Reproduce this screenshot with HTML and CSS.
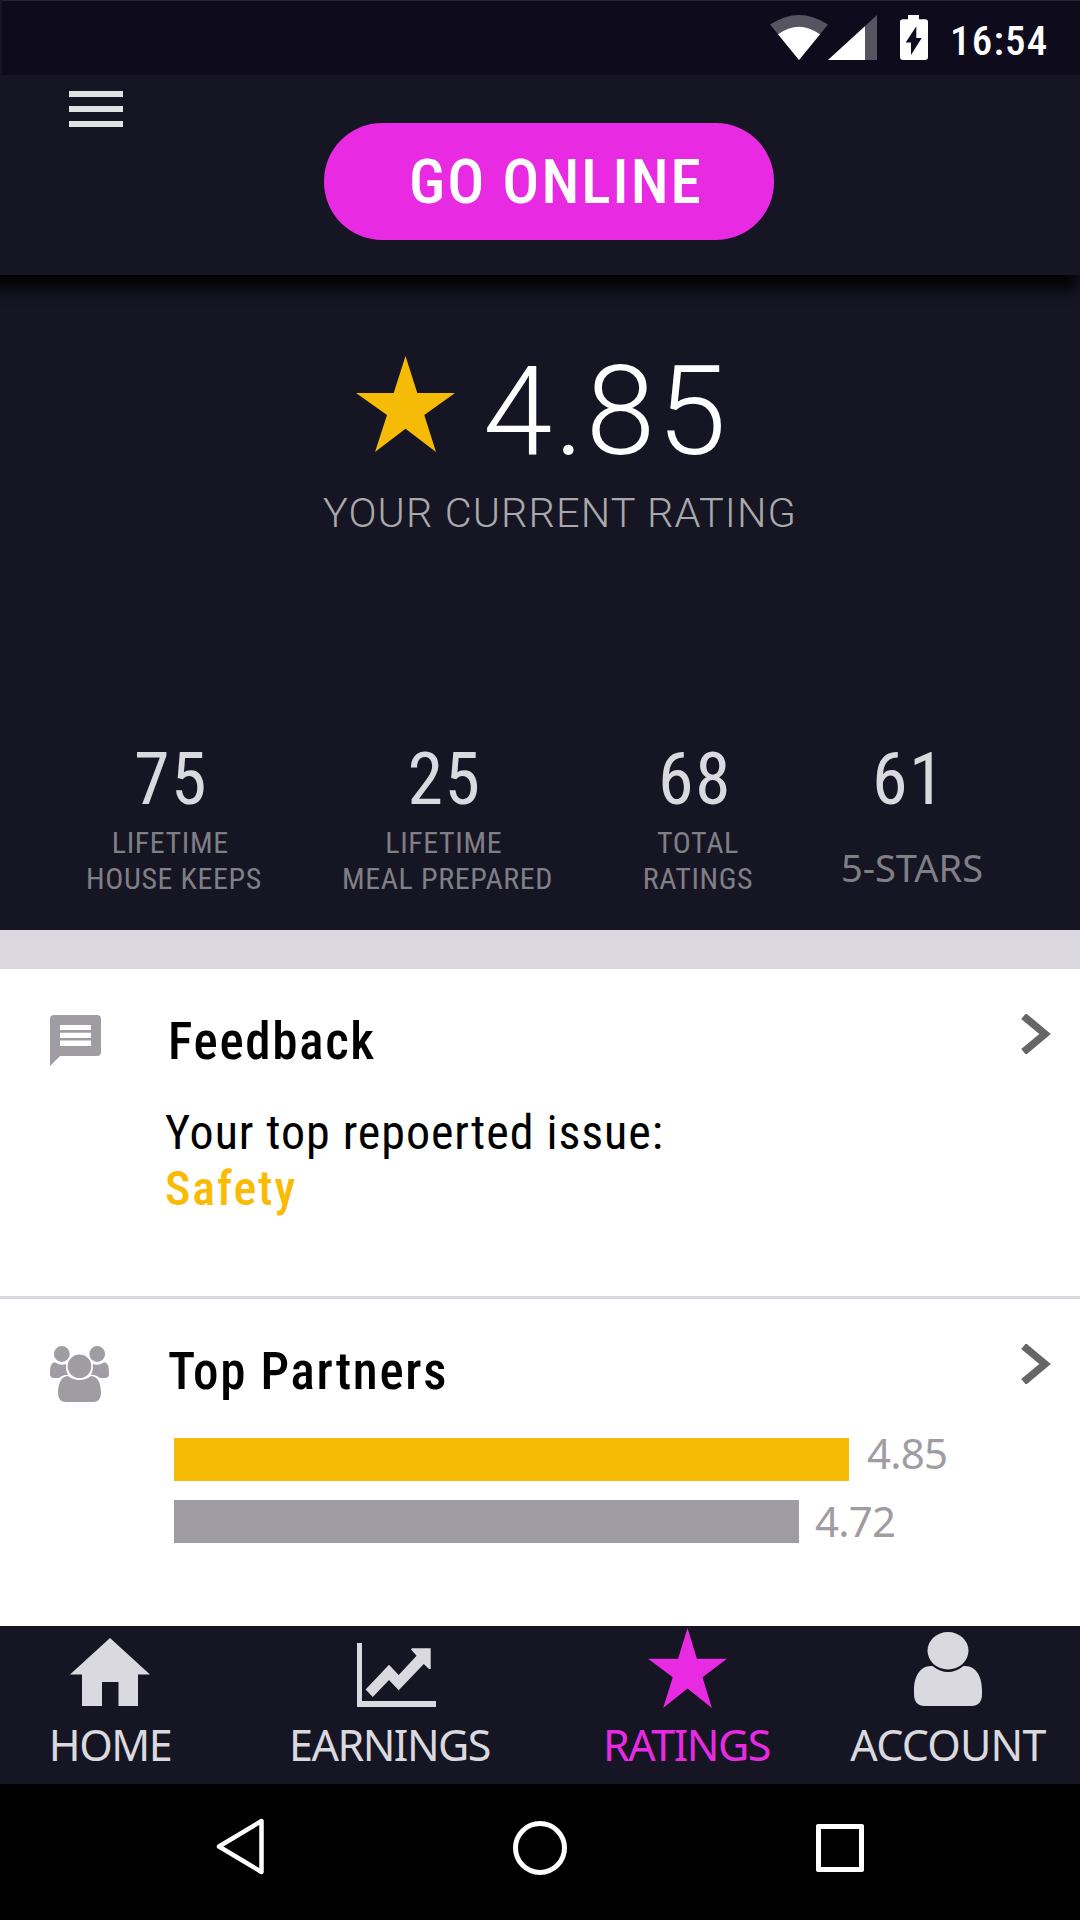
FILE: index.html
```html
<!DOCTYPE html>
<html lang="en">
<head>
    <meta charset="UTF-8">
    <meta name="viewport" content="width=device-width, initial-scale=1.0">
    <title>Ratings</title>
    <link rel="stylesheet" href="styles.css">
</head>
<body>
    <div class="status-bar">
        <svg class="wifi" width="58" height="45" viewBox="0 0 58 45">
            <path d="M0 9.5Q29 -9.5 58 9.5L29 45Z" fill="#565460"/>
            <path d="M8 19.3Q29 4 50 19.3L29 45Z" fill="#fff"/>
        </svg>
        <svg class="signal" width="49" height="45" viewBox="0 0 49 45">
            <path d="M0 45L49 0V45Z" fill="#565460"/>
            <path d="M0 45L37 11.3V45Z" fill="#fff"/>
        </svg>
        <svg class="battery" width="28" height="45" viewBox="0 0 28 45">
            <path d="M8 0H19V4.3H25Q28 4.3 28 7V42Q28 45 25 45H3Q0 45 0 42V7Q0 4.3 3 4.3H8Z" fill="#fff"/>
            <path d="M16.3 11.3V23H21.7L11 40V27.5H5.7Z" fill="#0d0b1c"/>
        </svg>
        <span class="time">16:54</span>
    </div>

    <header class="header">
        <div class="menu">
            <span></span>
            <span></span>
            <span></span>
        </div>
        <button class="go-online">GO ONLINE</button>
    </header>

    <section class="rating">
        <div class="rating-score">
            <svg width="99" height="96" viewBox="0 0 99 96">
                <path d="M49.5 0L61.3 37H99L68.3 59L80 96L49.5 72.7L19 96L31 59L0 37H37.7Z" fill="#f5bb06"/>
            </svg>
            <span>4.85</span>
        </div>
        <p class="rating-label">YOUR CURRENT RATING</p>

        <div class="stats">
            <div class="stat">
                <div class="stat-number">75</div>
                <p>LIFETIME&nbsp;<br>HOUSE KEEPS</p>
            </div>
            <div class="stat">
                <div class="stat-number">25</div>
                <p>LIFETIME&nbsp;<br>MEAL PREPARED</p>
            </div>
            <div class="stat">
                <div class="stat-number">68</div>
                <p>TOTAL<br>RATINGS</p>
            </div>
            <div class="stat">
                <div class="stat-number">61</div>
                <p class="five-stars">5-STARS</p>
            </div>
        </div>
    </section>

    <section class="card feedback">
        <svg class="card-icon" width="51" height="51" viewBox="0 0 51 51">
            <path d="M4 0H47Q51 0 51 4V37Q51 41 47 41H10L0 51V4Q0 0 4 0Z" fill="#9f9da3"/>
            <path d="M10 10H41V15H10ZM10 17.7H41V23H10ZM10 25.5H41V31H10Z" fill="#fff"/>
        </svg>
        <div class="card-body">
            <h2>Feedback</h2>
            <p class="issue">Your top repoerted issue:<br><b>Safety</b></p>
        </div>
        <svg class="chevron" width="30" height="40" viewBox="0 0 30 40">
            <path d="M5.5 4.5L24 20L5.5 35.5" fill="none" stroke="#666" stroke-width="7.5" stroke-linecap="square"/>
        </svg>
    </section>

    <section class="card partners">
        <svg class="card-icon" width="59" height="56" viewBox="0 0 59 56">
            <g fill="#9f9da3">
                <circle cx="11.8" cy="8" r="7.9"/>
                <circle cx="47.2" cy="8" r="7.9"/>
                <circle cx="29.5" cy="20.3" r="11.8"/>
                <path d="M4 16.3Q0 18 0 26V28Q0 32 4 32H9Q12 29 18 28.7Q15.5 24 16.2 18Q12 19.5 8 18Q6 16.5 4 16.3Z"/>
                <path d="M55 16.3Q59 18 59 26V28Q59 32 55 32H50Q47 29 41 28.7Q43.5 24 42.8 18Q47 19.5 51 18Q53 16.5 55 16.3Z"/>
                <path d="M18 30C10 30 8 40 8 47Q8 56 16 56H43Q51 56 51 47C51 40 49 30 41 30Q36 34 29.5 34Q23 34 18 30Z"/>
            </g>
        </svg>
        <div class="card-body">
            <h2>Top Partners</h2>
            <div class="bars">
                <div class="bar-row first">
                    <div class="bar" style="width: 675px"></div>
                    <span>4.85</span>
                </div>
                <div class="bar-row">
                    <div class="bar" style="width: 625px"></div>
                    <span>4.72</span>
                </div>
            </div>
        </div>
        <svg class="chevron" width="30" height="40" viewBox="0 0 30 40">
            <path d="M5.5 4.5L24 20L5.5 35.5" fill="none" stroke="#666" stroke-width="7.5" stroke-linecap="square"/>
        </svg>
    </section>

    <nav class="tabs">
        <div class="tab home">
            <div class="tab-icon">
                <svg width="80" height="68" viewBox="0 0 80 68">
                    <path d="M40 0L80 36.5H68V68H48.5V44H32V68H12V36.5H0Z" fill="#dad9df"/>
                </svg>
            </div>
            <p>HOME</p>
        </div>
        <div class="tab">
            <div class="tab-icon earnings">
                <svg width="79" height="64" viewBox="0 0 79 64">
                    <path d="M0 0H5V58H79V64H0Z" fill="#dad9df"/>
                    <path d="M8.6 46.5L32 21.7L41.7 32L59.6 12.7L54 6.5L55 5.3H73.7V26H72L66.8 21L41.7 47.3L32 37L15.8 54Z" fill="#dad9df"/>
                </svg>
            </div>
            <p>EARNINGS</p>
        </div>
        <div class="tab active">
            <div class="tab-icon">
                <svg width="79" height="80" viewBox="0 0 99 96" preserveAspectRatio="none">
                    <path d="M49.5 0L61.3 37H99L68.3 59L80 96L49.5 72.7L19 96L31 59L0 37H37.7Z" fill="#e82ae2"/>
                </svg>
            </div>
            <p>RATINGS</p>
        </div>
        <div class="tab account">
            <div class="tab-icon">
                <svg width="68" height="74" viewBox="0 0 68 74">
                    <ellipse cx="34" cy="18.7" rx="20.5" ry="18.7" fill="#dad9df"/>
                    <path d="M17 34C5 34 0 46 0 58V62Q0 74 11 74H57Q68 74 68 62V58C68 46 63 34 51 34H49.5Q42 40 34 40Q26 40 18.5 34Z" fill="#dad9df"/>
                </svg>
            </div>
            <p>ACCOUNT</p>
        </div>
    </nav>

    <div class="system-bar">
        <svg class="back" width="48" height="57" viewBox="0 0 48 57">
            <path d="M45.5 3V54L3 28.5Z" fill="none" stroke="#fff" stroke-width="4.5" stroke-linejoin="round"/>
        </svg>
        <div class="circle"></div>
        <div class="square"></div>
    </div>
</body>
</html>
```
FILE: styles.css
```css
* {
    box-sizing: border-box;
}

body {
    margin: 0;
    padding: 0;
    width: 1080px;
    background-color: white;
    color: black;
    font-family: "Roboto Condensed", Roboto, sans-serif;
    font-stretch: 75%;
}

p, h2 {
    margin: 0;
}

svg {
    display: block;
    flex-shrink: 0;
}

.status-bar {
    display: flex;
    align-items: flex-start;
    height: 75px;
    padding: 14px 0 0 768px;
    background-color: #0d0b1c;
    border-top: 1px solid #262432;
    border-left: 2px solid #161523;
}

.battery {
    margin-left: 23px;
}

.time {
    margin-left: 22px;
    color: white;
    font-size: 41px;
    font-weight: 500;
    line-height: 52px;
    letter-spacing: 1.2px;
}

.header {
    position: relative;
    display: flex;
    align-items: flex-start;
    height: 200px;
    padding-left: 69px;
    background-color: #161523;
    box-shadow: -8px 9px 12px 5px #030306;
    clip-path: inset(0 0 -40px 0);
}

.menu {
    display: flex;
    flex-direction: column;
    gap: 9px;
    width: 54px;
    margin-top: 16px;
}

.menu span {
    height: 6px;
    background-color: #e2e2e2;
}

.go-online {
    width: 450px;
    height: 117px;
    margin: 48px 0 0 201px;
    padding: 2px 0 0 85px;
    border: none;
    border-radius: 58px;
    background-color: #e82ae2;
    color: white;
    font-family: inherit;
    font-stretch: inherit;
    font-size: 61.5px;
    font-weight: 500;
    letter-spacing: 2px;
    line-height: 115px;
    text-align: left;
}

.rating {
    height: 655px;
    padding-top: 81px;
    background-color: #161523;
}

.rating-score {
    display: flex;
    height: 110px;
    padding-left: 356px;
    font-family: Roboto, sans-serif;
    font-stretch: 100%;
}

.rating-score span {
    margin-left: 28px;
    color: white;
    font-size: 125px;
    font-weight: 300;
    line-height: 112px;
    letter-spacing: 1.8px;
}

.rating-label {
    margin-top: 20px;
    padding-left: 323px;
    color: #a9a9a9;
    font-family: Roboto, sans-serif;
    font-stretch: 100%;
    font-size: 41.5px;
    font-weight: 300;
    line-height: 54px;
    letter-spacing: 1.1px;
}

.stats {
    display: grid;
    grid-template-columns: 200px 247px 154px 174px;
    column-gap: 50px;
    margin-top: 203px;
    padding-left: 74px;
    text-align: center;
}

.stat-number {
    margin-right: 6px;
    color: #dad9df;
    font-size: 72px;
    line-height: 73px;
    letter-spacing: 1.5px;
}

.stat p {
    margin-top: 9px;
    color: #807f85;
    font-size: 30px;
    line-height: 36px;
    letter-spacing: 0.6px;
}

.stat .five-stars {
    margin-top: 33px;
    font-family: "Noto Sans", sans-serif;
    font-stretch: 100%;
    font-size: 38px;
    letter-spacing: 0;
}

.card {
    display: flex;
    align-items: flex-start;
    padding-top: 42px;
    padding-left: 50px;
}

.feedback {
    height: 369px;
    border-top: 39px solid #dbd9df;
    border-bottom: 3px solid #dbd9df;
}

.partners {
    height: 327px;
}

.card-icon {
    margin-top: 4px;
}

.feedback .card-icon {
    margin-right: 65px;
}

.partners .card-icon {
    margin-top: 5px;
    margin-right: 57px;
}

.card-body {
    width: 855px;
}

.card h2 {
    padding-top: 1px;
    padding-left: 2px;
    font-size: 51px;
    font-weight: 500;
    line-height: 60px;
    letter-spacing: 1.7px;
}

.issue {
    margin-top: 33px;
    margin-left: -1px;
    font-size: 48px;
    line-height: 56px;
    letter-spacing: 0.95px;
}

.issue b {
    color: #fabb05;
    font-weight: 500;
    letter-spacing: 1.8px;
}

.chevron {
    margin-top: 3px;
}

.bars {
    display: flex;
    flex-direction: column;
    gap: 19px;
    margin: 36px 0 0 8px;
}

.bar-row {
    display: flex;
    gap: 16px;
    height: 43px;
}

.bar {
    background-color: #9f9da3;
}

.bar-row span {
    color: #9f9da3;
    font-family: "Noto Sans", sans-serif;
    font-stretch: 100%;
    font-size: 42px;
    line-height: 41px;
    letter-spacing: -0.8px;
}

.first {
    gap: 18px;
}

.first .bar {
    background-color: #f5bb06;
}

.first span {
    line-height: 29px;
}

.tabs {
    display: grid;
    grid-template-columns: 222px 335px 259px 264px;
    height: 158px;
    background-color: #161523;
    color: #dad9df;
    text-align: center;
}

.tab-icon {
    display: flex;
    justify-content: center;
    align-items: flex-end;
    height: 80px;
}

.home .tab-icon {
    padding-right: 2px;
}

.tab.active .tab-icon {
    height: 82px;
    padding-left: 1px;
}

.tab .earnings {
    height: 81px;
    padding-left: 14px;
}

.tab p {
    padding-top: 4px;
    font-family: "Noto Sans", sans-serif;
    font-stretch: 100%;
    font-size: 43px;
    line-height: 70px;
    letter-spacing: -1.5px;
}

.home p {
    padding-right: 2px;
}

.tab .earnings + p {
    padding-top: 3px;
}

.tab.active p {
    padding-top: 2px;
    color: #e82ae2;
}

.account p {
    letter-spacing: -0.8px;
}

.system-bar {
    display: flex;
    align-items: center;
    gap: 249px;
    height: 136px;
    padding: 0 0 8px 216px;
    background-color: black;
}

.back {
    margin-bottom: 3px;
}

.circle {
    width: 54px;
    height: 54px;
    border: 5px solid white;
    border-radius: 50%;
}

.square {
    width: 48px;
    height: 48px;
    border: 5px solid white;
    border-radius: 2px;
}
```
